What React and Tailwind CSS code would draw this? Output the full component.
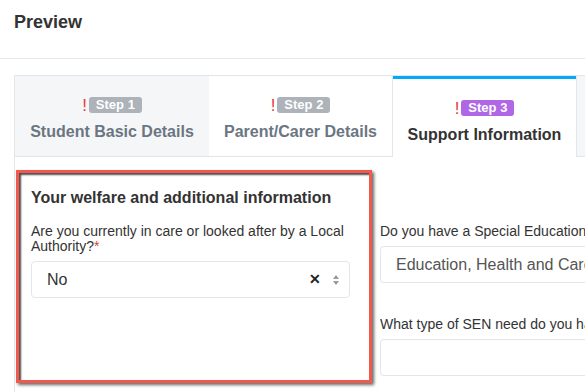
export default function App() {
  const tabs = [
    { step: "Step 1", title: "Student Basic Details", w: "w-[194px]", cls: "bg-[#f5f6f8] border-b border-[#e3e7eb]", badge: "bg-[#adb3b9]", text: "text-[#6b7682]" },
    { step: "Step 2", title: "Parent/Carer Details", w: "w-[184px]", cls: "bg-white border-b border-r border-[#e3e7eb]", badge: "bg-[#adb3b9]", text: "text-[#6b7682]" },
    { step: "Step 3", title: "Support Information", w: "w-[183px]", cls: "bg-white border-t-[3px] border-t-[#03a9f4]", badge: "bg-[#b067e6]", text: "text-[#333]" },
  ];

  return (
    <div className="w-[585px] h-[392px] overflow-hidden bg-white font-['Liberation_Sans',Arial,sans-serif] text-[#333]">
      <div className="h-[59px] border-b border-[#e5e8ec] px-[14px] pt-[11px]">
        <h1 className="text-[18px] font-bold leading-[22px]">Preview</h1>
      </div>

      <div className="ml-[14px] mt-[16px] border-l border-[#e3e7eb]">
        <div className="flex h-[82px] border-t border-[#e3e7eb]">
          {tabs.map((t) => (
            <div key={t.step} className={`${t.w} ${t.cls} flex flex-col items-center pt-[21px]`}>
              <div className="flex items-center h-[16px]">
                <span className="text-[#e53935] text-[17px] font-light leading-none mr-[2px]">!</span>
                <span className={`${t.badge} text-white text-[13px] font-bold rounded-[3px] px-[7px] h-[16px] leading-[16px]`}>
                  {t.step}
                </span>
              </div>
              <div className={`${t.text} text-[16px] font-bold mt-[9px] leading-[20px]`}>{t.title}</div>
            </div>
          ))}
          <div className="flex-1 bg-[#f5f6f8] border-l border-b border-[#e3e7eb]" />
        </div>

        <div className="flex pl-[1px] pt-[13px] h-[240px]">
          <div className="w-[356px] h-[213px] border-[3px] border-[#f2594e] shadow-[inset_2px_2px_2px_rgba(0,0,0,0.7),2px_2px_3px_rgba(0,0,0,0.6)] pl-[12px] pr-[19px] pt-[15px]">
            <h2 className="text-[16px] font-bold leading-[20px]">Your welfare and additional information</h2>
            <label className="block mt-[16px] text-[14px] leading-[15px]">
              Are you currently in care or looked after by a Local Authority?<span className="text-[#e53935]">*</span>
            </label>
            <div className="mt-[7px] h-[37px] border border-[#e3e7eb] rounded-[4px] flex items-center pl-[15px] pr-[10px]">
              <span className="text-[16px] flex-1">No</span>
              <span className="text-[14px] font-bold text-[#222] mr-[12px]">✕</span>
              <svg width="6" height="10" viewBox="0 0 6 10">
                <path d="M3 0 L6 4 L0 4 Z" fill="#999" />
                <path d="M3 10 L6 6 L0 6 Z" fill="#999" />
              </svg>
            </div>
          </div>

          <div className="ml-[8px] flex-1 pt-[54px] overflow-hidden whitespace-nowrap">
            <label className="block text-[14px] leading-[15px]">Do you have a Special Educational Needs (SEN) statement?</label>
            <div className="mt-[7px] h-[37px] border border-[#e3e7eb] rounded-l-[4px] border-r-0 flex items-center pl-[15px] text-[16px] text-[#555]">
              Education, Health and Care Plan (EHCP)
            </div>
            <label className="block mt-[34px] text-[14px] leading-[15px]">What type of SEN need do you have?</label>
            <div className="mt-[7px] h-[37px] border border-[#e3e7eb] rounded-l-[4px] border-r-0" />
          </div>
        </div>
      </div>
    </div>
  );
}
